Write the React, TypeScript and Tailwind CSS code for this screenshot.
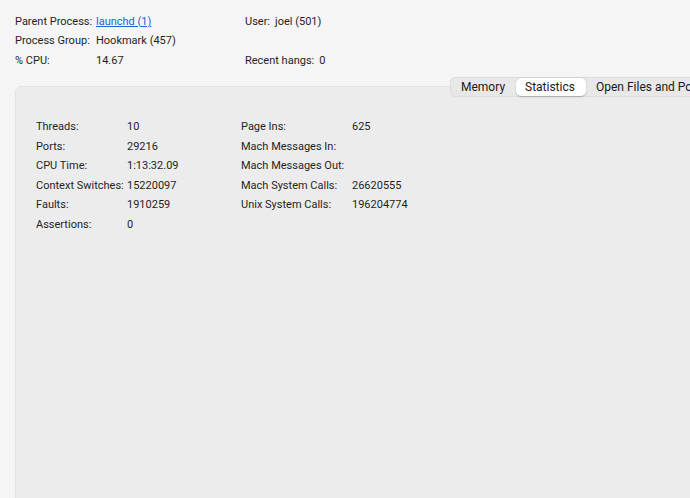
import React from "react";

const left = [
  ["Threads:", "10"],
  ["Ports:", "29216"],
  ["CPU Time:", "1:13:32.09"],
  ["Context Switches:", "15220097"],
  ["Faults:", "1910259"],
  ["Assertions:", "0"],
];

const right = [
  ["Page Ins:", "625"],
  ["Mach Messages In:", ""],
  ["Mach Messages Out:", ""],
  ["Mach System Calls:", "26620555"],
  ["Unix System Calls:", "196204774"],
];

export default function App() {
  return (
    <div
      className="w-[690px] h-[498px] overflow-hidden bg-[#f5f5f5] text-[11px] text-[#1f1f1f] flex flex-col whitespace-nowrap"
      style={{ fontFamily: "Roboto, Inter, 'Liberation Sans', sans-serif" }}
    >
      {/* Header info */}
      <div className="pt-[12px] pl-[15px] flex">
        <div className="w-[230px] shrink-0">
          <div className="h-[19.5px] flex items-center">
            <span className="w-[81px] shrink-0">Parent Process:</span>
            <span className="text-[#1b62d8] underline">launchd (1)</span>
          </div>
          <div className="h-[19.5px] flex items-center">
            <span className="w-[81px] shrink-0">Process Group:</span>
            <span>Hookmark (457)</span>
          </div>
          <div className="h-[19.5px] flex items-center">
            <span className="w-[81px] shrink-0">% CPU:</span>
            <span>14.67</span>
          </div>
        </div>
        <div className="shrink-0">
          <div className="h-[19.5px] flex items-center gap-[5px]">
            <span>User:</span>
            <span>joel (501)</span>
          </div>
          <div className="h-[19.5px]" />
          <div className="h-[19.5px] flex items-center gap-[5px]">
            <span>Recent hangs:</span>
            <span>0</span>
          </div>
        </div>
      </div>

      {/* Panel */}
      <div className="relative mt-[15px] ml-[15px] -mr-[10px] flex-1 -mb-[10px] rounded-[6px] bg-[#ececec] border border-[#e2e2e2]">
        {/* Tab control */}
        <div className="absolute left-[434px] -top-[10px] flex h-[20px] items-stretch rounded-[5px] bg-[#e8e8e8] border border-[#dcdcdc] text-[12px] text-[#1a1a1a]">
          <div className="px-[10px] flex items-center w-[65px]">Memory</div>
          <div className="px-[9px] flex items-center w-[70px] bg-white rounded-[5px] shadow-[0_0.5px_1.5px_rgba(0,0,0,0.25)]">
            Statistics
          </div>
          <div className="px-[10px] flex items-center">Open Files and Ports</div>
        </div>

        <div className="pt-[31px] pl-[20px] flex">
          <div className="w-[205px] shrink-0">
            {left.map(([k, v]) => (
              <div key={k} className="h-[19.5px] flex items-center">
                <span className="w-[91px] shrink-0">{k}</span>
                <span>{v}</span>
              </div>
            ))}
          </div>
          <div className="shrink-0">
            {right.map(([k, v]) => (
              <div key={k} className="h-[19.5px] flex items-center">
                <span className="w-[111px] shrink-0">{k}</span>
                <span>{v}</span>
              </div>
            ))}
          </div>
        </div>
      </div>
    </div>
  );
}
